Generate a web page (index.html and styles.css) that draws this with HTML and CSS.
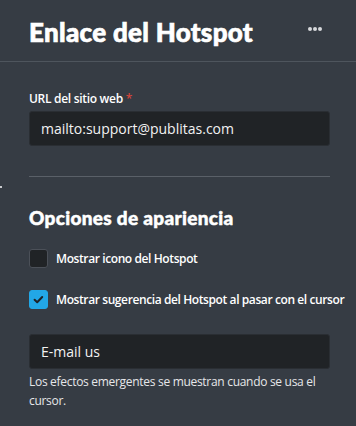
FILE: index.html
```html
<!DOCTYPE html>
<html lang="es">
<head>
<meta charset="utf-8">
<link rel="stylesheet" href="styles.css">
</head>
<body>
<div class="panel">
  <header class="header">
    <h1 class="title">Enlace del Hotspot</h1>
    <button class="more" aria-label="Más"><span></span><span></span><span></span></button>
  </header>
  <div class="content">
    <div class="field">
      <label class="label">URL del sitio web <span class="req">*</span></label>
      <div class="input">mailto:support@publitas.com</div>
    </div>
    <hr class="divider">
    <h2 class="subtitle">Opciones de apariencia</h2>
    <div class="check-row">
      <span class="box"></span>
      <span class="check-text">Mostrar icono del Hotspot</span>
    </div>
    <div class="check-row">
      <span class="box checked"><svg viewBox="0 0 19 19" width="19" height="19"><path d="M5.6 9.8 L8.2 12.3 L13.2 7" fill="none" stroke="#1e2328" stroke-width="2" stroke-linecap="round" stroke-linejoin="round"/></svg></span>
      <span class="check-text">Mostrar sugerencia del Hotspot al pasar con el cursor</span>
    </div>
    <div class="input input2">E-mail us</div>
    <p class="help">Los efectos emergentes se muestran cuando se usa el cursor.</p>
  </div>
  <span class="stray"></span>
</div>
</body>
</html>
```
FILE: styles.css
```css
html, body {
  margin: 0;
  padding: 0;
  background: #363c44;
}
body {
  width: 356px;
  height: 426px;
  overflow: hidden;
  font-family: "Open Sans", "Noto Sans", sans-serif;
  color: #ffffff;
}
.panel {
  position: relative;
  height: 426px;
}
.header {
  display: flex;
  align-items: center;
  justify-content: space-between;
  height: 62px;
  padding: 0 34px 0 29px;
  border-bottom: 1px solid #4e555d;
  box-sizing: border-box;
}
.title {
  margin: 0;
  font-family: Lato, sans-serif;
  font-weight: 900;
  font-size: 26px;
  letter-spacing: 0.3px;
  color: #ffffff;
  -webkit-text-stroke: 0.7px #ffffff;
  padding-top: 2px;
}
.more {
  display: flex;
  gap: 1px;
  background: none;
  border: 0;
  padding: 0;
  margin-top: -4px;
}
.more span {
  width: 4px;
  height: 4px;
  border-radius: 50%;
  background: #d7d9dc;
}
.content {
  padding: 28px 26px 0 29px;
}
.field {
  display: flex;
  flex-direction: column;
}
.label {
  font-family: "Open Sans", sans-serif;
  font-weight: 600;
  font-size: 12px;
  letter-spacing: -0.3px;
  line-height: 18px;
  color: #ffffff;
  margin-bottom: 3px;
}
.req {
  color: #d2453b;
}
.input {
  height: 35px;
  background: #202326;
  border: 1px solid #2a2e33;
  border-radius: 3px;
  box-sizing: border-box;
  display: flex;
  align-items: center;
  padding-left: 11px;
  font-size: 14px;
  color: #f2f2f2;
}
.divider {
  border: 0;
  border-top: 1px solid #5a6068;
  margin: 30px 0 0 0;
}
.subtitle {
  margin: 28px 0 0 0;
  font-family: Lato, sans-serif;
  font-weight: 900;
  font-size: 19px;
  letter-spacing: 0.3px;
  line-height: 26px;
  -webkit-text-stroke: 0.5px #ffffff;
}
.check-row {
  display: flex;
  align-items: center;
  gap: 8px;
  margin-top: 18px;
}
.check-row + .check-row {
  margin-top: 22px;
}
.box {
  width: 19px;
  height: 19px;
  box-sizing: border-box;
  border: 1px solid #4b5058;
  border-radius: 3px;
  background: #202326;
  flex: none;
  display: flex;
}
.box.checked {
  background: #22a7e6;
  border-color: #22a7e6;
}
.box.checked svg {
  margin: -1px;
}
.check-text {
  font-family: "Open Sans", sans-serif;
  font-weight: 600;
  font-size: 12px;
  letter-spacing: -0.4px;
  color: #ffffff;
  white-space: nowrap;
}
.input2 {
  margin-top: 25px;
}
.help {
  margin: 3px 0 0 0;
  font-size: 12px;
  letter-spacing: -0.3px;
  line-height: 19px;
  color: #e6e7e9;
}
.stray {
  position: absolute;
  left: 0;
  top: 186px;
  width: 2px;
  height: 2px;
  background: #c9cbce;
}
```
